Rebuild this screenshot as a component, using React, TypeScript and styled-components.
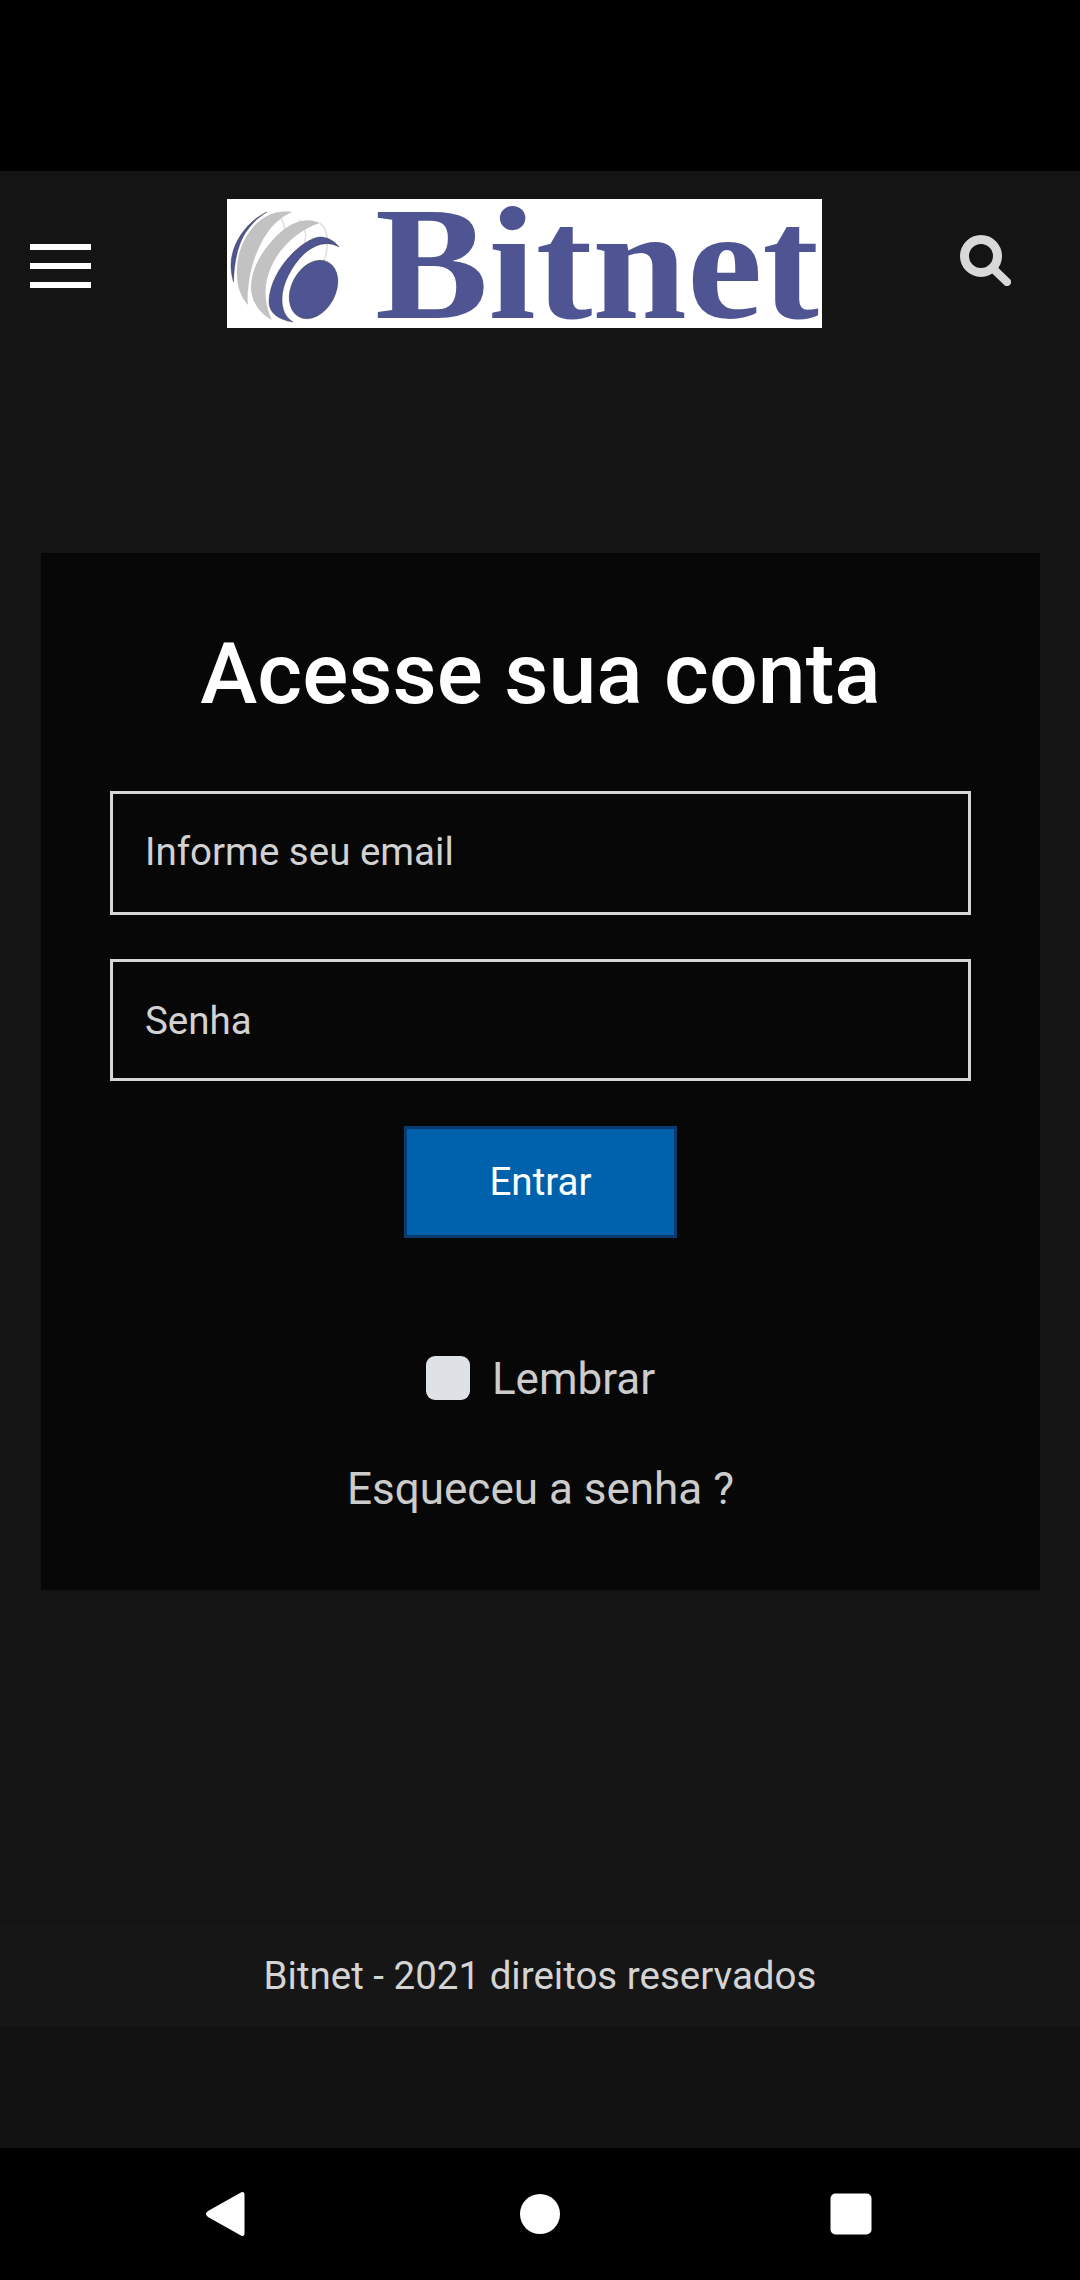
import React from "react";
import styled, { createGlobalStyle } from "styled-components";

const Global = createGlobalStyle`
  html, body { margin: 0; padding: 0; background: #141414; }
  * { box-sizing: border-box; }
  body { font-family: Roboto, "Noto Sans", sans-serif; }
  input::placeholder { color: #d2d2d2; opacity: 1; }
`;

const Page = styled.div`
  width: 1080px;
  height: 2280px;
  display: flex;
  flex-direction: column;
  background: #141414;
  overflow: hidden;
`;
const StatusBar = styled.div`
  height: 171px;
  background: #000;
  flex: none;
`;
const Header = styled.header`
  height: 382px;
  flex: none;
  display: grid;
  grid-template-columns: 227px 595px 1fr;
  align-items: start;
  padding-top: 28px;
`;
const MenuButton = styled.div`
  margin: 45px 0 0 30px;
  width: 61px;
  display: flex;
  flex-direction: column;
  gap: 13px;
`;
const MenuBar = styled.span`
  display: block;
  height: 6px;
  background: #fff;
`;
const Logo = styled.svg`
  display: block;
  width: 595px;
  height: 129px;
  overflow: visible;
`;
const SearchButton = styled.svg`
  display: block;
  width: 51px;
  height: 51px;
  margin: 36px 0 0 138px;
  color: #d8d8d8;
`;
const Card = styled.section`
  flex: none;
  width: 999px;
  height: 1037px;
  margin-left: 41px;
  background: #070707;
  display: flex;
  flex-direction: column;
  align-items: center;
  padding: 0 69px;
`;
const Title = styled.h1`
  margin: 68px 0 0;
  height: 105px;
  font-size: 86px;
  line-height: 105px;
  font-weight: 500;
  color: #fff;
  white-space: nowrap;
`;
const Field = styled.input<{ $gap: number; $height: number; $lift: number }>`
  display: block;
  flex: none;
  width: 861px;
  height: ${(p) => p.$height}px;
  margin-top: ${(p) => p.$gap}px;
  padding: 0 32px ${(p) => p.$lift}px;
  background: transparent;
  border: 3px solid #d6d6d6;
  border-radius: 0;
  outline: none;
  color: #d2d2d2;
  font: 400 38.5px Roboto, sans-serif;
`;
const SubmitButton = styled.button`
  flex: none;
  width: 273px;
  height: 112px;
  margin-top: 45px;
  padding: 0 0 1px;
  background: #0062ad;
  border: 3px solid #0a3a70;
  color: #fff;
  font: 400 38.5px Roboto, sans-serif;
`;
const Remember = styled.label`
  display: flex;
  align-items: center;
  gap: 22px;
  margin-top: 118px;
  height: 44px;
  color: #cccccc;
  font-size: 44px;
`;
const RememberText = styled.span`
  padding-top: 2px;
`;
const CheckBox = styled.span`
  display: block;
  width: 44px;
  height: 44px;
  border-radius: 9px;
  background: #dee2e6;
`;
const Forgot = styled.a`
  margin-top: 64px;
  color: #cccccc;
  font-size: 44px;
  line-height: 50px;
  white-space: nowrap;
`;
const Footer = styled.footer`
  flex: none;
  height: 102px;
  margin-top: 335px;
  padding-bottom: 2px;
  background: #161616;
  color: #d4d4d4;
  font-size: 38.5px;
  display: flex;
  align-items: center;
  justify-content: center;
`;
const Spacer = styled.div`
  flex: 1;
  background: #121212;
`;
const NavBar = styled.nav`
  flex: none;
  height: 132px;
  background: #000;
  display: grid;
  grid-template-columns: repeat(3, 311px);
  align-items: center;
  justify-items: center;
  padding: 0 73px;
`;
const NavIcon = styled.svg`
  display: block;
  width: 48px;
  height: 48px;
  fill: #fff;
`;

const App: React.FC = () => (
  <Page>
    <Global />
    <StatusBar />
    <Header>
      <MenuButton>
        <MenuBar />
        <MenuBar />
        <MenuBar />
      </MenuButton>
      <Logo viewBox="0 0 595 129">
        <rect width="595" height="129" fill="#fff" />
        <path d="M49 13C56 20 60 30 56 41M72 21C80 28 80 40 76 50M93 24C103 32 102 52 95 66" fill="none" stroke="#dedede" strokeWidth="1.5" />
        <path d="M40 13C20 22 4 45 4 66C4 72 5 78 6.5 83C7 65 10 50 16 38C22 27 30 19 40 13Z" fill="#4f5592" stroke="#333" strokeWidth=".4" />
        <path d="M65 13C50 11 38 16 28 26C15 40 9 58 10 76C10 88 14 98 21 106C20 98 21 90 22 83C24 65 32 45 41 33C47 24 56 17 65 13Z" fill="#c2c2c2" />
        <path d="M93 24C80 18 68 22 56 31C38 46 24 68 24 88C24 102 32 114 45 121C42 115 40 109 39 100C37 84 42 70 50 57C60 42 76 29 93 24Z" fill="#c2c2c2" />
        <path d="M112 48C106 40 96 36 88 39C68 46 42 76 42 103C42 114 52 121 66 123C58 118 55 110 55 100C55 85 65 66 78 54C90 44 102 42 112 48Z" fill="#4f5592" stroke="#333" strokeWidth=".4" />
        <ellipse cx="86.5" cy="90.5" rx="22" ry="31" transform="rotate(28 86.5 90.5)" fill="#4f5592" stroke="#333" strokeWidth=".4" />
        <text x="148" y="119" fontFamily="'Liberation Serif', serif" fontWeight="700" fontSize="160" fill="#4f5592" textLength="444" lengthAdjust="spacingAndGlyphs">Bitnet</text>
      </Logo>
      <SearchButton viewBox="0 0 51 51">
        <circle cx="21" cy="21" r="16.5" fill="none" stroke="currentColor" strokeWidth="9" />
        <path d="M33.5 34 47 47" fill="none" stroke="currentColor" strokeWidth="8" strokeLinecap="round" />
      </SearchButton>
    </Header>
    <Card>
      <Title>Acesse sua conta</Title>
      <Field $gap={65} $height={124} $lift={3} placeholder="Informe seu email" />
      <Field $gap={44} $height={122} $lift={0} placeholder="Senha" />
      <SubmitButton>Entrar</SubmitButton>
      <Remember>
        <CheckBox />
        <RememberText>Lembrar</RememberText>
      </Remember>
      <Forgot>Esqueceu a senha ?</Forgot>
    </Card>
    <Footer>Bitnet - 2021 direitos reservados</Footer>
    <Spacer />
    <NavBar>
      <NavIcon viewBox="0 0 48 48"><path d="M3 21 35 3Q39.5 .5 39.5 5V43Q39.5 47.5 35 45L3 27Q-1 24 3 21Z" /></NavIcon>
      <NavIcon viewBox="0 0 48 48"><circle cx="24" cy="24" r="20" /></NavIcon>
      <NavIcon viewBox="0 0 48 48"><rect x="3.5" y="3.5" width="41" height="41" rx="5" /></NavIcon>
    </NavBar>
  </Page>
);

export default App;
